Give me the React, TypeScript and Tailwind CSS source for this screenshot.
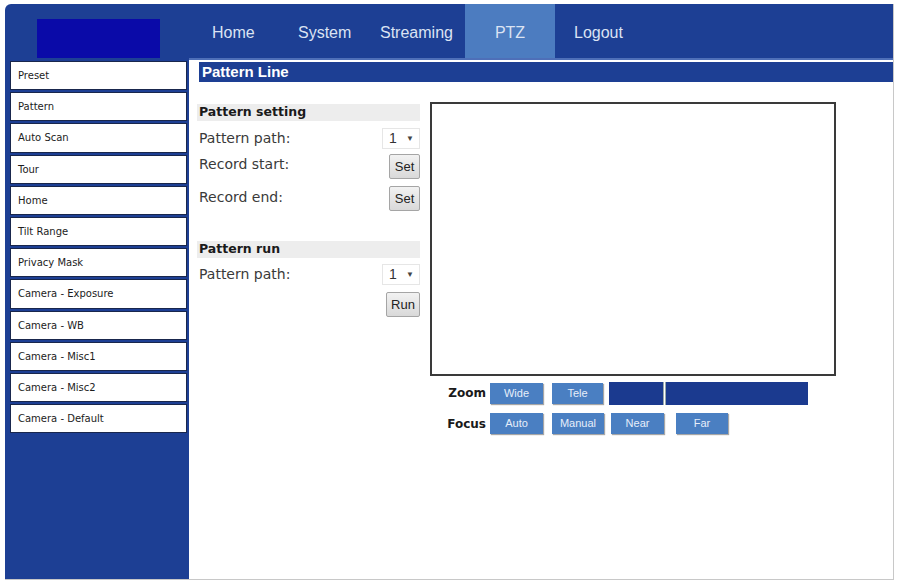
import React from "react";

const sideItems = [
  "Preset",
  "Pattern",
  "Auto Scan",
  "Tour",
  "Home",
  "Tilt Range",
  "Privacy Mask",
  "Camera - Exposure",
  "Camera - WB",
  "Camera - Misc1",
  "Camera - Misc2",
  "Camera - Default",
];

const sans = { fontFamily: '"Liberation Sans", Arial, sans-serif' };
const dejavu = { fontFamily: '"DejaVu Sans", Verdana, sans-serif' };

function BlueBtn({ label, w }: { label: string; w: string }) {
  return (
    <button
      className={`${w} h-[21px] bg-[#4a7fc2] text-[11px] text-[#e6eefa] shadow-[1px_1px_1px_rgba(0,0,0,0.35)] flex items-center justify-center`}
      style={sans}
    >
      {label}
    </button>
  );
}

function GrayBtn({ label, w }: { label: string; w: string }) {
  return (
    <button
      className={`${w} h-[25px] rounded-[2px] border border-[#a5a5a5] bg-gradient-to-b from-[#f2f2f2] to-[#d9d9d9] text-[13px] text-[#222] flex items-center justify-center`}
      style={sans}
    >
      {label}
    </button>
  );
}

function PathSelect() {
  return (
    <div className="w-[38px] h-[21px] border border-[#e6e6e6] flex items-center justify-between pl-[6px] pr-[5px] text-[14px] text-[#333]" style={sans}>
      <span>1</span>
      <span className="text-[8px] text-[#444]">▼</span>
    </div>
  );
}

export default function App() {
  return (
    <div className="w-[898px] h-[582px] bg-white overflow-hidden pt-[4px] pl-[5px]">
      <div className="w-[889px] h-[576px] flex flex-col rounded-tl-[6px] overflow-hidden border-b border-r border-[#c8c8c8]">
        {/* header */}
        <div className="h-[56px] flex bg-[#1d3f94] shrink-0">
          <div className="w-[184px] pl-[32px] pt-[15px]">
            <div className="w-[123px] h-[39px] bg-[#0a0aa8]" />
          </div>
          <nav
            className="flex-1 flex items-stretch pl-[23px] border-b-2 border-[#4e6fb8] text-[16px] text-[#dbe3f3]"
            style={sans}
          >
            <div className="w-[86px] flex items-center pt-[3px]">Home</div>
            <div className="w-[82px] flex items-center pt-[3px]">System</div>
            <div className="w-[85px] flex items-center pt-[3px]">Streaming</div>
            <div className="w-[90px] flex items-center justify-center pt-[3px] bg-[#4c7cc0]">PTZ</div>
            <div className="ml-[19px] flex items-center pt-[3px]">Logout</div>
          </nav>
        </div>

        <div className="flex flex-1 min-h-0">
          {/* sidebar */}
          <aside className="w-[184px] bg-[#1d3f94] pl-[5px] pr-[2px] pt-[1px] shrink-0">
            {sideItems.map((item) => (
              <div
                key={item}
                className="h-[29.2px] mb-[2px] bg-white border border-[#19274d] flex items-center pl-[7px] text-[10px] text-[#1c1c1c]"
                style={dejavu}
              >
                {item}
              </div>
            ))}
          </aside>

          {/* main */}
          <main className="flex-1 bg-white flex flex-col">
            <div
              className="ml-[10px] mt-[2px] h-[20px] bg-[#1d3f94] text-white font-bold text-[15px] pl-[3px] flex items-center"
              style={sans}
            >
              Pattern Line
            </div>

            <div className="flex items-start">
              {/* settings panel */}
              <div className="ml-[8px] mt-[22px] w-[223px] flex flex-col text-[14px] text-[#3a3a3a]" style={dejavu}>
                <div className="h-[17px] bg-[#ededed] pl-[2px] flex items-center font-bold text-[12.5px] text-[#1a1a1a]">
                  Pattern setting
                </div>
                <div className="mt-[7px] h-[21px] flex items-center justify-between pl-[2px]">
                  <span>Pattern path:</span>
                  <PathSelect />
                </div>
                <div className="mt-[5px] h-[26px] flex items-start justify-between pl-[2px]">
                  <span>Record start:</span>
                  <GrayBtn label="Set" w="w-[31px]" />
                </div>
                <div className="mt-[6px] h-[26px] flex items-start justify-between pl-[2px]">
                  <span className="mt-[1px]">Record end:</span>
                  <GrayBtn label="Set" w="w-[31px]" />
                </div>
                <div className="mt-[29px] h-[17px] bg-[#ededed] pl-[2px] flex items-center font-bold text-[12.5px] text-[#1a1a1a]">
                  Pattern run
                </div>
                <div className="mt-[6px] h-[21px] flex items-center justify-between pl-[2px]">
                  <span>Pattern path:</span>
                  <PathSelect />
                </div>
                <div className="mt-[7px] flex justify-end">
                  <GrayBtn label="Run" w="w-[34px]" />
                </div>
              </div>

              {/* video + controls */}
              <div className="ml-[10px] mt-[20px] flex flex-col">
                <div className="w-[406px] h-[274px] border-2 border-[#3a3a3a] bg-white" />
                <div className="mt-[6px] flex items-center h-[22px]">
                  <span className="w-[60px] text-right pr-[4px] font-bold text-[12px] text-[#1a1a1a]" style={dejavu}>
                    Zoom
                  </span>
                  <BlueBtn label="Wide" w="w-[53px]" />
                  <div className="ml-[9px]">
                    <BlueBtn label="Tele" w="w-[51px]" />
                  </div>
                  <div className="ml-[6px] w-[199px] h-[23px] bg-[#1b3a8f] flex">
                    <div className="ml-[54px] w-[3px] h-full bg-white border-x border-[#9aa]" />
                  </div>
                </div>
                <div className="mt-[9px] flex items-center h-[21px]">
                  <span className="w-[60px] text-right pr-[4px] font-bold text-[12px] text-[#1a1a1a]" style={dejavu}>
                    Focus
                  </span>
                  <BlueBtn label="Auto" w="w-[53px]" />
                  <div className="ml-[9px]">
                    <BlueBtn label="Manual" w="w-[52px]" />
                  </div>
                  <div className="ml-[7px]">
                    <BlueBtn label="Near" w="w-[53px]" />
                  </div>
                  <div className="ml-[12px]">
                    <BlueBtn label="Far" w="w-[52px]" />
                  </div>
                </div>
              </div>
            </div>
          </main>
        </div>
      </div>
    </div>
  );
}
